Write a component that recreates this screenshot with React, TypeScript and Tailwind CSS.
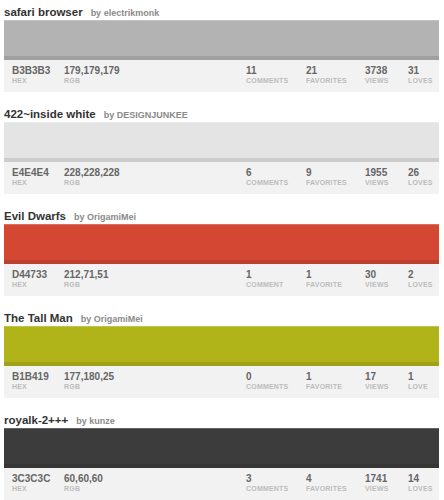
const palettes = [
  { title: "safari browser", user: "electrikmonk", hex: "B3B3B3", rgb: "179,179,179", comments: 11, favorites: 21, views: 3738, loves: 31, swatch: "bg-[#b3b3b3]" },
  { title: "422~inside white", user: "DESIGNJUNKEE", hex: "E4E4E4", rgb: "228,228,228", comments: 6, favorites: 9, views: 1955, loves: 26, swatch: "bg-[#e4e4e4]" },
  { title: "Evil Dwarfs", user: "OrigamiMei", hex: "D44733", rgb: "212,71,51", comments: 1, favorites: 1, views: 30, loves: 2, swatch: "bg-[#d44733]" },
  { title: "The Tall Man", user: "OrigamiMei", hex: "B1B419", rgb: "177,180,25", comments: 0, favorites: 1, views: 17, loves: 1, swatch: "bg-[#b1b419]" },
  { title: "royalk-2+++", user: "kunze", hex: "3C3C3C", rgb: "60,60,60", comments: 3, favorites: 4, views: 1741, loves: 14, swatch: "bg-[#3c3c3c]" },
];

function Stat({ value, label, width }: { value: string | number; label: string; width: string }) {
  return (
    <div className={`${width} shrink-0`}>
      <div className="text-[10px] leading-[11px] font-bold text-[#666]">{value}</div>
      <div className="mt-[1px] text-[7px] leading-[8px] font-bold uppercase tracking-[0.2px] text-[#bcbcbc]">{label}</div>
    </div>
  );
}

export default function App() {
  const plural = (n: number, word: string) => (n === 1 ? word : word + "s");

  return (
    <div className="min-h-[500px] bg-white pl-[4px] font-['Liberation_Sans',Arial,sans-serif]">
      {palettes.map((p) => (
        <div key={p.title} className="w-[435px] mb-[10px]">
          {/* Title */}
          <div className="h-[20px] flex items-baseline pt-[5px] leading-[14px]">
            <span className="text-[11.5px] font-bold text-[#333]">{p.title}</span>
            <span className="ml-[8px] text-[9px] font-bold text-[#8a8a8a]">by {p.user}</span>
          </div>

          {/* Swatch */}
          <div className={`${p.swatch} h-[40px] border-t border-white/20 border-b-4 border-b-black/10`} />

          {/* Info */}
          <div className="h-[32px] bg-[#f2f2f2] flex pl-[8px] pt-[5px]">
            <Stat value={p.hex} label="Hex" width="w-[52px]" />
            <Stat value={p.rgb} label="RGB" width="flex-1" />
            <Stat value={p.comments} label={plural(p.comments, "Comment")} width="w-[60px]" />
            <Stat value={p.favorites} label={plural(p.favorites, "Favorite")} width="w-[59px]" />
            <Stat value={p.views} label="Views" width="w-[43px]" />
            <Stat value={p.loves} label={plural(p.loves, "Love")} width="w-[31px]" />
          </div>
        </div>
      ))}
    </div>
  );
}
